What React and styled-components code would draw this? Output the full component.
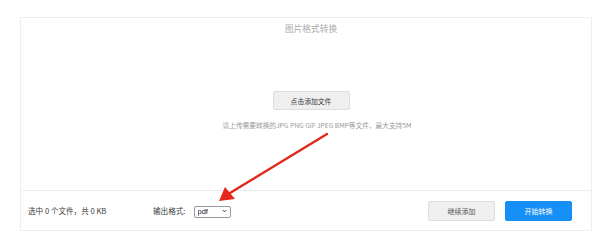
import React from 'react';
import styled, { createGlobalStyle } from 'styled-components';

const GlobalStyle = createGlobalStyle`
  html, body {
    margin: 0;
    padding: 0;
    background: #fff;
    font-family: "Noto Sans CJK SC", "Liberation Sans", sans-serif;
  }
`;

const Page = styled.div`
  position: relative;
  width: 600px;
  height: 237px;
  padding: 17px 8px 0 20px;
  box-sizing: border-box;
`;

const Panel = styled.div`
  height: 214px;
  border: 1px solid #eee;
  box-sizing: border-box;
  display: flex;
  flex-direction: column;
`;

const UploadArea = styled.div`
  flex: 1;
  display: flex;
  flex-direction: column;
  align-items: center;
  padding: 5px 0 0 10px;
`;

const Title = styled.div`
  font-size: 8.7px;
  line-height: 12px;
  color: #aaa;
`;

const AddButton = styled.button`
  margin-top: 56px;
  width: 77px;
  height: 19px;
  padding: 0;
  border: 1px solid #ddd;
  border-radius: 2px;
  background: #efefef;
  color: #333;
  font-family: inherit;
  font-size: 6.8px;
`;

const Hint = styled.div`
  margin-top: 10px;
  margin-left: 12px;
  font-size: 6.7px;
  line-height: 10px;
  color: #999;
  white-space: nowrap;
`;

const Footer = styled.div`
  height: 39px;
  border-top: 1px solid #eee;
  display: flex;
  align-items: center;
  padding: 0 19px 0 7px;
  font-size: 7.6px;
  color: #3a3a3a;
`;

const Summary = styled.span`
  width: 125px;
  white-space: nowrap;
`;

const Label = styled.span`
  white-space: nowrap;
`;

const SelectWrap = styled.div`
  position: relative;
  margin-left: 8px;
  width: 37px;
  height: 12px;
`;

const Select = styled.select`
  appearance: none;
  width: 100%;
  height: 100%;
  box-sizing: border-box;
  border: 1px solid #999;
  border-radius: 2px;
  background: #fff;
  padding: 0 0 0 3px;
  font-family: "Liberation Sans", sans-serif;
  font-size: 7.5px;
  color: #222;
  line-height: 10px;
  outline: none;
`;

const Chevron = styled.svg`
  position: absolute;
  right: 4px;
  top: 4px;
  width: 5px;
  height: 4px;
  pointer-events: none;
`;

const Spacer = styled.div`
  flex: 1;
`;

const ActionButton = styled.button`
  width: 67px;
  height: 20px;
  padding: 0;
  margin-left: ${({ $gap }) => $gap || 0}px;
  border-radius: 2px;
  font-family: inherit;
  font-size: 7px;
  border: 1px solid ${({ $primary }) => ($primary ? '#168cf5' : '#ddd')};
  background: ${({ $primary }) => ($primary ? '#168ff7' : '#f0f0f0')};
  color: ${({ $primary }) => ($primary ? '#fff' : '#555')};
`;

const Arrow = styled.svg`
  position: absolute;
  left: 0;
  top: 0;
  width: 600px;
  height: 237px;
  pointer-events: none;
`;

export default function App() {
  return (
    <>
      <GlobalStyle />
      <Page>
        <Panel>
          <UploadArea>
            <Title>图片格式转换</Title>
            <AddButton>点击添加文件</AddButton>
            <Hint>请上传需要转换的JPG PNG GIF JPEG BMP等文件，最大支持5M</Hint>
          </UploadArea>
          <Footer>
            <Summary>选中 0 个文件，共 0 KB</Summary>
            <Label>输出格式:</Label>
            <SelectWrap>
              <Select defaultValue="pdf">
                <option value="pdf">pdf</option>
                <option value="jpg">jpg</option>
                <option value="png">png</option>
              </Select>
              <Chevron viewBox="0 0 10 8">
                <path d="M1.5 2 L5 5.5 L8.5 2" fill="none" stroke="#222" strokeWidth="1.8" />
              </Chevron>
            </SelectWrap>
            <Spacer />
            <ActionButton>继续添加</ActionButton>
            <ActionButton $primary $gap={10}>开始转换</ActionButton>
          </Footer>
        </Panel>
        <Arrow viewBox="0 0 600 237">
          <line x1="327" y1="134" x2="230" y2="193" stroke="#e5261c" strokeWidth="2.4" strokeLinecap="round" />
          <polygon points="219,201 225,187 235,199" fill="#e5261c" />
        </Arrow>
      </Page>
    </>
  );
}
